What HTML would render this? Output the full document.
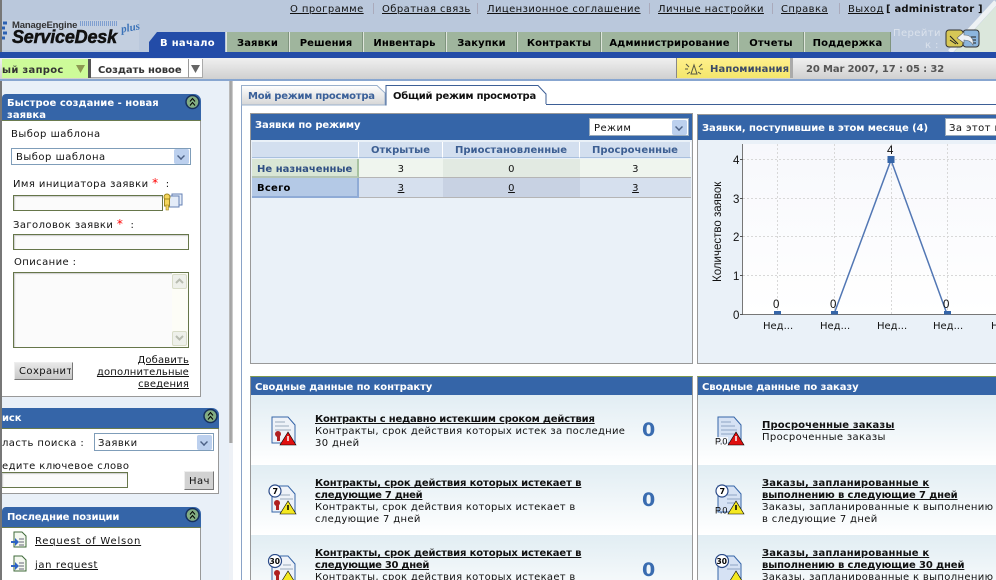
<!DOCTYPE html>
<html><head><meta charset="utf-8">
<style>
html,body{margin:0;padding:0;background:#fff}
#p{position:relative;width:996px;height:580px;overflow:hidden;background:#fff;font:10px "DejaVu Sans","Liberation Sans",sans-serif;color:#111;letter-spacing:.42px}
#p div,#p svg{position:absolute}
.t{white-space:nowrap;line-height:12px;margin-top:1px}
.u{text-decoration:underline}
.b{font-weight:bold}
.d{letter-spacing:.35px}
.w{color:#fff;font-weight:bold;letter-spacing:-.08px}
.tab{top:32px;height:20px;background:#9fb59d;border-left:1px solid #dfe6dc;border-right:1px solid #7f947e;box-sizing:border-box;text-align:center;line-height:24px;font-weight:bold;letter-spacing:.1px;color:#000}
.sep{top:3px;width:1px;height:11px;background:#aab}
.bar{background:#3565a8}
.sel{background:#fff;border:1px solid #7f9db9;box-sizing:border-box}
.arr{background:#bcd0ee;width:15px;height:15px;right:1px;top:1px;border-radius:2px}
.arr:after{content:"";position:absolute;left:3px;top:3px;width:6px;height:6px;box-sizing:content-box;border:solid #4d6185;border-width:0 2px 2px 0;transform:scale(.7) rotate(45deg)}
.inp{background:#fbfbfb;border:1px solid #66764a;box-sizing:border-box;box-shadow:inset 1px 1px 1px #ccc}
.th{top:142px;height:16px;background:#d3dfef;border-bottom:1px solid #a9c0de;border-right:1px solid #fff;box-sizing:border-box;text-align:center;line-height:18px;font-weight:bold;color:#3c5e92;letter-spacing:.02px;overflow:hidden}
.c{text-align:center;line-height:21px;box-sizing:border-box;border-bottom:1px solid #b5b5b5;overflow:hidden}
.row{height:70px;background:linear-gradient(#e1edf3,#fff)}
.z{font:bold 19px "DejaVu Sans",sans-serif;color:#3a6cb0;letter-spacing:0}
</style></head><body>
<div id="p">
<!-- header -->
<div style="left:0;top:0;width:996px;height:52px;background:#bac8dc"></div>
<svg style="left:860px;top:0" width="136" height="52"><polygon points="94,52 136,6 136,52" fill="#dbe7dc"/><path d="M90 52L136 2" stroke="#eef2f4" stroke-width="5"/></svg>
<div style="left:0;top:0;width:2px;height:580px;background:#777"></div>
<div class="t u" style="left:290px;top:3px">О программе</div><div class="sep" style="left:373px"></div>
<div class="t u" style="left:382px;top:3px">Обратная связь</div><div class="sep" style="left:477px"></div>
<div class="t u" style="left:487px;top:3px">Лицензионное соглашение</div><div class="sep" style="left:649px"></div>
<div class="t u" style="left:658px;top:3px">Личные настройки</div><div class="sep" style="left:772px"></div>
<div class="t u" style="left:781px;top:3px">Справка</div><div class="sep" style="left:839px"></div>
<div class="t u" style="left:848px;top:3px">Выход</div>
<div class="t b" style="left:886px;top:3px;letter-spacing:.2px">[ administrator ]</div>
<!-- logo -->
<div style="left:2px;top:20px;width:137px;height:30px;background:#c3cfe0"></div>
<svg style="left:2px;top:20px" width="8" height="22"><path d="M1 3h4M0 8h3M1 13h4M0 18h3" stroke="#2c62b4" stroke-width="3"/></svg>
<div class="t" style="left:12px;top:19px;font:bold 9.500px 'Liberation Sans',sans-serif;letter-spacing:-.15px;color:#333;line-height:12px">ManageEngine</div>
<div style="left:80px;top:21px;width:37px;height:5px;background:repeating-linear-gradient(90deg,#7f9fd0 0 1px,transparent 1px 2px)"></div>
<div class="t" style="left:12px;top:27px;font:italic bold 18px/18px 'Liberation Sans',sans-serif;letter-spacing:-.2px;color:#111;-webkit-text-stroke:.5px #111">ServiceDesk</div>
<div class="t" style="left:121px;top:21px;font:italic bold 11px 'Liberation Serif',serif;letter-spacing:0;color:#3a72b8;transform:rotate(-10deg)">plus</div>
<!-- tabs -->
<svg style="left:149px;top:32px" width="77" height="20"><path d="M0 20V10L8 0H76V20Z" fill="#234ca8"/></svg>
<div class="t b" style="left:160px;top:37px;color:#fff;letter-spacing:.3px">В начало</div>
<div class="tab" style="left:226px;width:63px">Заявки</div>
<div class="tab" style="left:289px;width:74px">Решения</div>
<div class="tab" style="left:363px;width:83px">Инвентарь</div>
<div class="tab" style="left:446px;width:71px">Закупки</div>
<div class="tab" style="left:517px;width:84px">Контракты</div>
<div class="tab" style="left:601px;width:137px">Администрирование</div>
<div class="tab" style="left:738px;width:66px">Отчеты</div>
<div class="tab" style="left:804px;width:87px">Поддержка</div>
<div class="t" style="left:893px;top:27px;color:#dbe2ec">Перейти</div>
<div class="t" style="left:925px;top:39px;color:#dbe2ec">к :</div>
<svg style="left:945px;top:29px" width="36" height="20"><rect x="1" y="1" width="17" height="17" rx="3" fill="#d6c756" stroke="#333"/><rect x="18" y="1" width="16" height="17" rx="3" fill="#8cb6de" stroke="#333"/><path d="M5 7l8 8M5 11l6 4M26 8h5M27 11h4M27 14h4" stroke="#222"/><path d="M12 9l7-6v3c7 0 10 4 9 10-2-4-5-5-9-5v3z" fill="#eef2f6" stroke="#666" stroke-width=".6"/></svg>
<div style="left:0;top:52px;width:996px;height:6px;background:#234ca8"></div>
<!-- toolbar -->
<div style="left:0;top:58px;width:996px;height:21px;background:linear-gradient(#f0f0f0,#d0d0d0)"></div>
<div style="left:0;top:79px;width:996px;height:2px;background:#88a6d0"></div>
<div style="left:2px;top:59px;width:86px;height:19px;background:#cdfb99"></div>
<div class="t" style="left:2px;top:64px;color:#333;font-weight:bold;letter-spacing:.3px">ый запрос</div>
<svg style="left:75px;top:65px" width="12" height="8"><path d="M1 0h9L5.500 8z" fill="#8d9a52"/></svg>
<div style="left:88px;top:59px;width:3px;height:19px;background:#555"></div>
<div style="left:91px;top:59px;width:112px;height:19px;background:#fff;border:solid #aaa;border-width:0 1px 1px 0;box-sizing:border-box"></div>
<div style="left:188px;top:59px;width:1px;height:19px;background:#999"></div>
<div class="t" style="left:98px;top:64px;color:#333;font-weight:bold;letter-spacing:-.05px">Создать новое</div>
<svg style="left:190px;top:65px" width="12" height="8"><path d="M1 0h9L5.500 8z" fill="#666"/></svg>
<div style="left:676px;top:58px;width:117px;height:20px;background:linear-gradient(#fff08c,#f4e66c);border-left:1px solid #888;border-right:3px solid #aaa;box-sizing:border-box"></div>
<svg style="left:685px;top:62px" width="18" height="13"><path d="M9 3l-3 9h6zM1 2l3 3M17 2l-3 3M0 7h3M15 7h3M2 12l3-2M16 12l-3-2" stroke="#554" fill="none"/></svg>
<div class="t b" style="left:710px;top:63px;color:#3c4a66;letter-spacing:.1px">Напоминания</div>
<div class="t b" style="left:806px;top:63px;color:#555;letter-spacing:-.13px">20 Mar 2007, 17 : 05 : 32</div>
<!-- sidebar -->
<div style="left:2px;top:81px;width:227px;height:499px;background:#e9f0f8"></div>
<div style="left:229px;top:81px;width:4px;height:362px;background:linear-gradient(90deg,#c4c4c4,#999,#ddd)"></div>
<div style="left:229px;top:443px;width:4px;height:137px;background:#eef1f6"></div>
<!-- panel 1 -->
<div style="left:2px;top:121px;width:199px;height:276px;background:#fff;border:solid #999;border-width:0 1px 1px 0;box-sizing:border-box"></div>
<div class="bar" style="left:2px;top:94px;width:199px;height:27px;border-radius:4px 7px 0 0;border-bottom:1px solid #6a7b4e;box-sizing:border-box"></div>
<div class="t w" style="left:7px;top:97px;letter-spacing:.02px">Быстрое создание - новая<br>заявка</div>
<svg style="left:185px;top:94px" width="15" height="16"><circle cx="7.500" cy="8" r="6.500" fill="#83ad82" stroke="#16305c" stroke-width="1.500"/><path d="M5 7.500l2.500-3 2.500 3M5 11.500l2.500-3 2.500 3" stroke="#000" fill="none"/></svg>
<div class="t" style="left:11px;top:128px;letter-spacing:.5px">Выбор шаблона</div>
<div class="sel" style="left:11px;top:148px;width:180px;height:17px"><div class="arr" style="top:0"></div></div>
<div class="t" style="left:16px;top:151px;letter-spacing:.5px">Выбор шаблона</div>
<div class="t" style="left:13px;top:176px">Имя инициатора заявки <span style="color:#f00;font-size:12px">*</span> &nbsp;:</div>
<div class="inp" style="left:13px;top:195px;width:150px;height:16px"></div>
<svg style="left:163px;top:192px" width="22" height="20"><rect x="9" y="2" width="10" height="11" fill="#e4ecf8" stroke="#6682b4"/><rect x="6" y="4" width="10" height="11" fill="#e4ecf8" stroke="#6682b4"/><circle cx="4" cy="5" r="3" fill="#f5d65c" stroke="#a08820"/><rect x="1.500" y="7" width="5" height="7" fill="#f5d65c" stroke="#a08820"/><rect x="3" y="13" width="2.500" height="5" fill="#f5d65c" stroke="#a08820" stroke-width=".6"/></svg>
<div class="t" style="left:13px;top:217px">Заголовок заявки <span style="color:#f00;font-size:12px">*</span> &nbsp;:</div>
<div class="inp" style="left:13px;top:234px;width:176px;height:16px"></div>
<div class="t" style="left:14px;top:256px">Описание :</div>
<div class="inp" style="left:13px;top:272px;width:176px;height:76px"></div>
<div style="left:172px;top:273px;width:16px;height:74px;background:#fdfdf7"></div>
<div style="left:172px;top:274px;width:15px;height:15px;background:#eef0ea;border:1px solid #d8dcc8;box-sizing:border-box;border-radius:2px"></div>
<div style="left:172px;top:331px;width:15px;height:15px;background:#eef0ea;border:1px solid #d8dcc8;box-sizing:border-box;border-radius:2px"></div>
<svg style="left:172px;top:274px" width="15" height="72"><path d="M4 9l3.500-3.500L11 9M4 62l3.500 3.500L11 62" stroke="#b8bcb0" stroke-width="2" fill="none"/></svg>
<div style="left:14px;top:362px;width:59px;height:18px;background:linear-gradient(#e8e8e8,#c8c8c8);border:1px solid;border-color:#eee #777 #777 #eee;box-sizing:border-box"></div>
<div class="t" style="left:19px;top:365px;width:52px;overflow:hidden">Сохранить</div>
<div class="t u" style="right:807px;top:354px;text-align:right;letter-spacing:.15px">Добавить<br>дополнительные<br>сведения</div>
<!-- panel 2 -->
<div style="left:2px;top:428px;width:217px;height:66px;background:#fff;border:solid #999;border-width:0 1px 1px 0;box-sizing:border-box"></div>
<div class="bar" style="left:2px;top:408px;width:217px;height:21px;border-radius:0 7px 0 0;border-bottom:1px solid #6a7b4e;box-sizing:border-box"></div>
<div class="t w" style="left:2px;top:412px">иск</div>
<svg style="left:203px;top:408px" width="15" height="16"><circle cx="7.500" cy="8" r="6.500" fill="#83ad82" stroke="#16305c" stroke-width="1.500"/><path d="M5 7.500l2.500-3 2.500 3M5 11.500l2.500-3 2.500 3" stroke="#000" fill="none"/></svg>
<div class="t" style="left:2px;top:437px">ласть поиска :</div>
<div class="sel" style="left:94px;top:433px;width:120px;height:18px"><div class="arr"></div></div>
<div class="t" style="left:98px;top:437px">Заявки</div>
<div class="t" style="left:2px;top:460px">едите ключевое слово</div>
<div class="inp" style="left:2px;top:472px;width:126px;height:16px;border-left:0"></div>
<div style="left:184px;top:471px;width:30px;height:19px;background:#d2d2d2;border:1px solid;border-color:#eee #777 #777 #eee;box-sizing:border-box"></div>
<div class="t" style="left:189px;top:475px">Нач</div>
<!-- panel 3 -->
<div style="left:2px;top:527px;width:199px;height:53px;background:#fff;border-right:1px solid #999;box-sizing:border-box"></div>
<div class="bar" style="left:2px;top:507px;width:199px;height:21px;border-radius:4px 7px 0 0;border-bottom:1px solid #6a7b4e;box-sizing:border-box"></div>
<div class="t w" style="left:7px;top:511px;letter-spacing:-.2px">Последние позиции</div>
<svg style="left:185px;top:507px" width="15" height="16"><circle cx="7.500" cy="8" r="6.500" fill="#83ad82" stroke="#16305c" stroke-width="1.500"/><path d="M5 7.500l2.500-3 2.500 3M5 11.500l2.500-3 2.500 3" stroke="#000" fill="none"/></svg>
<svg style="left:11px;top:531px" width="16" height="18"><path d="M3 1h8l4 4v11H3z" fill="#f4f8f0" stroke="#3f6a3a"/><path d="M8 8h5M8 11h5M8 14h5" stroke="#667"/><path d="M0 10h4V7l4 4-4 4v-3H0z" fill="#2c62c4"/></svg>
<div class="t u" style="left:35px;top:535px;letter-spacing:.8px">Request of Welson</div>
<svg style="left:11px;top:555px" width="16" height="18"><path d="M3 1h8l4 4v11H3z" fill="#f4f8f0" stroke="#3f6a3a"/><path d="M8 8h5M8 11h5M8 14h5" stroke="#667"/><path d="M0 10h4V7l4 4-4 4v-3H0z" fill="#2c62c4"/></svg>
<div class="t u" style="left:35px;top:559px;letter-spacing:.6px">jan request</div>
<!-- sub tabs -->
<div style="left:241px;top:104px;width:755px;height:1px;background:#3d5f96"></div>
<div style="left:241px;top:105px;width:1px;height:475px;background:#8aa3c8"></div>
<svg style="left:241px;top:85px" width="310" height="21"><path d="M0.500 20V0.500H136L144 8V20Z" fill="url(#g)" stroke="#9ab0cc"/><path d="M145 20.500V0.500H297L305 9V20" fill="#fff" stroke="#3d5f96"/><rect x="146" y="19" width="159" height="2" fill="#fff"/><defs><linearGradient id="g" x1="0" y1="0" x2="0" y2="1"><stop offset="0" stop-color="#fff"/><stop offset="1" stop-color="#d6d6d6"/></linearGradient></defs></svg>
<div class="t b" style="left:248px;top:90px;color:#3a6099;letter-spacing:-.25px">Мой режим просмотра</div>
<div class="t b" style="left:393px;top:90px;color:#111;letter-spacing:-.25px">Общий режим просмотра</div>
<!-- table panel -->
<div style="left:250px;top:113px;width:443px;height:251px;background:#eaf1f8;border:1px solid #999;box-sizing:border-box"></div>
<div class="bar" style="left:251px;top:114px;width:441px;height:26px"></div>
<div class="t w" style="left:255px;top:119px">Заявки по режиму</div>
<div class="sel" style="left:589px;top:118px;width:100px;height:18px;border-color:#9ab"><div class="arr"></div></div>
<div class="t" style="left:594px;top:122px">Режим</div>
<div class="th" style="left:252px;width:107px"></div>
<div class="th" style="left:359px;width:84px">Открытые</div>
<div class="th" style="left:443px;width:137px">Приостановленные</div>
<div class="th" style="left:580px;width:111px">Просроченные</div>
<div class="c b" style="left:252px;top:159px;width:107px;height:19px;background:#d9e6d5;color:#2f4f83;border-right:2px solid #a7c2a0;border-bottom:2px solid #b5c5b5;text-align:left;padding-left:5px;letter-spacing:.02px">Не назначенные</div>
<div class="c" style="left:359px;top:159px;width:84px;height:19px;background:#eff5ee">3</div>
<div class="c" style="left:443px;top:159px;width:137px;height:19px;background:#e2eae2">0</div>
<div class="c" style="left:580px;top:159px;width:111px;height:19px;background:#eff5ee">3</div>
<div class="c b" style="left:252px;top:178px;width:107px;height:20px;background:#b4c9e6;color:#000;border-right:2px solid #8fabd6;border-bottom:2px solid #8fabd6;text-align:left;padding-left:5px;line-height:22px;letter-spacing:.25px">Всего</div>
<div class="c u" style="left:359px;top:178px;width:84px;height:20px;background:#d6e0ee;line-height:22px">3</div>
<div class="c u" style="left:443px;top:178px;width:137px;height:20px;background:#c8d2e3;line-height:22px">0</div>
<div class="c u" style="left:580px;top:178px;width:111px;height:20px;background:#d6e0ee;line-height:22px">3</div>
<!-- chart panel -->
<div style="left:697px;top:114px;width:310px;height:250px;background:#eaf1f8;border:1px solid #999;box-sizing:border-box"></div>
<div class="bar" style="left:698px;top:115px;width:298px;height:25px"></div>
<div class="t w" style="left:702px;top:122px">Заявки, поступившие в этом месяце (4)</div>
<div class="sel" style="left:945px;top:118px;width:60px;height:18px;border-color:#9ab"></div>
<div class="t" style="left:949px;top:122px">За этот м</div>
<svg style="left:697px;top:140px" width="299" height="200">
<defs><linearGradient id="h" x1="0" y1="0" x2="0" y2="1"><stop offset="0" stop-color="#f7f8fc"/><stop offset="1" stop-color="#fff"/></linearGradient></defs>
<rect x="46" y="4" width="253" height="170" fill="url(#h)"/>
<g stroke="#d8d8d8" stroke-dasharray="2 2"><path d="M46 19.500H299M46 58.500H299M46 96.500H299M46 135.500H299M80.500 4V174M137.500 4V174M194.500 4V174M250.500 4V174"/></g>
<path d="M45.500 4V174.500H299" stroke="#777" fill="none"/>
<path d="M43 19.500h3M43 58.500h3M43 96.500h3M43 135.500h3M43 174.500h3" stroke="#555"/>
<path d="M137 174L194 20L250 174" stroke="#5277b4" stroke-width="1.500" fill="none"/>
<rect x="190.500" y="16" width="7" height="7" fill="#3565a8"/>
<rect x="77" y="171" width="7" height="3.500" fill="#3565a8"/><rect x="134" y="171" width="7" height="3.500" fill="#3565a8"/><rect x="247" y="171" width="7" height="3.500" fill="#3565a8"/>
<g font-family="'Liberation Sans',sans-serif" font-size="11.500" fill="#111"><text x="36" y="24">4</text><text x="36" y="63">3</text><text x="36" y="101">2</text><text x="36" y="140">1</text><text x="36" y="179">0</text>
<text x="76" y="168">0</text><text x="133" y="168">0</text><text x="190" y="14">4</text><text x="246" y="168">0</text>
<text transform="translate(24,142) rotate(-90)" font-size="11.500" letter-spacing="0">Количество заявок</text></g>
<g font-size="10" fill="#111" letter-spacing="0"><text x="66" y="189">Нед...</text><text x="123" y="189">Нед...</text><text x="180" y="189">Нед...</text><text x="236" y="189">Нед...</text><text x="294" y="189">Нед...</text></g>
</svg>
<!-- contract panel -->
<div style="left:250px;top:376px;width:443px;height:210px;background:#fff;border:1px solid #999;border-top-color:#7f9a4e;box-sizing:border-box"></div>
<div class="bar" style="left:251px;top:377px;width:441px;height:18px"></div>
<div class="t w" style="left:255px;top:381px">Сводные данные по контракту</div>
<div class="row" style="left:251px;top:395px;width:441px"></div>
<div class="row" style="left:251px;top:465px;width:441px"></div>
<div class="row" style="left:251px;top:535px;width:441px"></div>
<svg style="left:270px;top:415px" width="30" height="32"><path d="M2 2h16l7 8v18H2z" fill="#eef2f8" stroke="#3565a8"/><path d="M5 7h10M5 11h14M5 15h16" stroke="#9ab"/><circle cx="8" cy="19" r="3" fill="#b02020"/><path d="M7 21h3v5H7z" fill="#b02020"/><path d="M18 17l-8 13h16z" fill="#e01010" stroke="#000" stroke-width=".6"/><path d="M18 21v5" stroke="#fff" stroke-width="1.500"/></svg>
<div class="t b u" style="left:315px;top:413px;letter-spacing:-.2px">Контракты с недавно истекшим сроком действия</div>
<div class="t d" style="left:315px;top:425px;letter-spacing:.28px">Контракты, срок действия которых истек за последние</div>
<div class="t d" style="left:315px;top:437px">30 дней</div>
<div class="t z" style="left:642px;top:418px">0</div>
<svg style="left:266px;top:484px" width="34" height="32"><path d="M6 2h16l7 8v18H6z" fill="#eef2f8" stroke="#3565a8"/><path d="M14 11h10M14 15h13" stroke="#9ab"/><circle cx="11" cy="19" r="3" fill="#b02020"/><path d="M10 21h3v5h-3z" fill="#b02020"/><path d="M22 17l-8 13h16z" fill="#f4e820" stroke="#000" stroke-width=".6"/><path d="M22 21v5" stroke="#000" stroke-width="1.500"/><circle cx="9" cy="7" r="6" fill="#fff" stroke="#2a4a88" stroke-width="1.200"/><text x="6.500" y="10" font-size="8" font-weight="bold" fill="#000">7</text></svg>
<div class="t b u" style="left:315px;top:477px;letter-spacing:-.12px">Контракты, срок действия которых истекает в</div>
<div class="t b u" style="left:315px;top:489px;letter-spacing:-.28px">следующие 7 дней</div>
<div class="t d" style="left:315px;top:501px;letter-spacing:.28px">Контракты, срок действия которых истекает в</div>
<div class="t d" style="left:315px;top:513px">следующие 7 дней</div>
<div class="t z" style="left:642px;top:488px">0</div>
<svg style="left:266px;top:554px" width="34" height="32"><path d="M6 2h16l7 8v18H6z" fill="#eef2f8" stroke="#3565a8"/><path d="M17 11h8M14 15h13" stroke="#9ab"/><circle cx="11" cy="19" r="3" fill="#b02020"/><path d="M10 21h3v5h-3z" fill="#b02020"/><path d="M22 17l-8 13h16z" fill="#f4e820" stroke="#000" stroke-width=".6"/><circle cx="9" cy="7" r="6.500" fill="#fff" stroke="#2a4a88" stroke-width="1.200"/><text x="3.500" y="10" font-size="7.500" font-weight="bold" fill="#000" letter-spacing="0">30</text></svg>
<div class="t b u" style="left:315px;top:547px;letter-spacing:-.12px">Контракты, срок действия которых истекает в</div>
<div class="t b u" style="left:315px;top:559px;letter-spacing:-.28px">следующие 30 дней</div>
<div class="t d" style="left:315px;top:571px;letter-spacing:.28px">Контракты, срок действия которых истекает в</div>
<div class="t z" style="left:642px;top:558px">0</div>
<!-- order panel -->
<div style="left:697px;top:376px;width:310px;height:210px;background:#fff;border:1px solid #999;border-top-color:#7f9a4e;box-sizing:border-box"></div>
<div class="bar" style="left:698px;top:377px;width:298px;height:18px"></div>
<div class="t w" style="left:702px;top:381px">Сводные данные по заказу</div>
<div class="row" style="left:698px;top:395px;width:298px"></div>
<div class="row" style="left:698px;top:465px;width:298px"></div>
<div class="row" style="left:698px;top:535px;width:298px"></div>
<svg style="left:715px;top:415px" width="32" height="32"><path d="M3 2h16l7 8v18H3z" fill="#d6e2f4" stroke="#3565a8"/><path d="M6 7h10M6 11h14M6 15h16M6 19h16" stroke="#8ea4c4"/><path d="M21 17l-8 13h16z" fill="#e01010" stroke="#000" stroke-width=".6"/><path d="M21 21v5" stroke="#fff" stroke-width="1.500"/><rect x="0" y="22" width="13" height="8" fill="#fff" opacity=".8"/><text x="0" y="29.500" font-family="'Liberation Sans'" font-size="9" fill="#000" letter-spacing="0">P.0</text></svg>
<div class="t b u" style="left:762px;top:419px;letter-spacing:.13px">Просроченные заказы</div>
<div class="t d" style="left:762px;top:431px">Просроченные заказы</div>
<svg style="left:713px;top:484px" width="34" height="32"><path d="M5 2h16l7 8v18H5z" fill="#d6e2f4" stroke="#3565a8"/><path d="M14 11h10M14 15h13M14 19h8" stroke="#8ea4c4"/><path d="M23 17l-8 13h16z" fill="#f4e820" stroke="#000" stroke-width=".6"/><path d="M23 21v5" stroke="#000" stroke-width="1.500"/><circle cx="9" cy="7" r="6" fill="#fff" stroke="#2a4a88" stroke-width="1.200"/><text x="6.500" y="10" font-size="8" font-weight="bold" fill="#000">7</text><text x="2" y="29.500" font-family="'Liberation Sans'" font-size="9" fill="#000" letter-spacing="0">P.0</text></svg>
<div class="t b u" style="left:762px;top:477px;letter-spacing:.13px">Заказы, запланированные к</div>
<div class="t b u" style="left:762px;top:489px;letter-spacing:-.12px">выполнению в следующие 7 дней</div>
<div class="t d" style="left:762px;top:501px">Заказы, запланированные к выполнению</div>
<div class="t d" style="left:762px;top:513px">в следующие 7 дней</div>
<svg style="left:713px;top:554px" width="34" height="32"><path d="M5 2h16l7 8v18H5z" fill="#d6e2f4" stroke="#3565a8"/><path d="M17 11h8M14 15h13" stroke="#8ea4c4"/><path d="M23 17l-8 13h16z" fill="#f4e820" stroke="#000" stroke-width=".6"/><circle cx="9" cy="7" r="6.500" fill="#fff" stroke="#2a4a88" stroke-width="1.200"/><text x="3.500" y="10" font-size="7.500" font-weight="bold" fill="#000" letter-spacing="0">30</text></svg>
<div class="t b u" style="left:762px;top:547px;letter-spacing:.13px">Заказы, запланированные к</div>
<div class="t b u" style="left:762px;top:559px;letter-spacing:-.12px">выполнению в следующие 30 дней</div>
<div class="t d" style="left:762px;top:571px">Заказы, запланированные к выполнению</div>
</div>
</body></html>
